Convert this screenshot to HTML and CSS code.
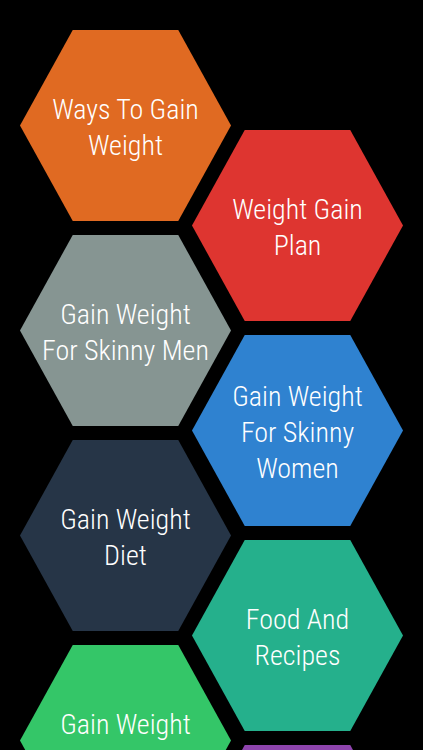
FILE: index.html
```html
<!DOCTYPE html>
<html lang="en">
<head>
<meta charset="utf-8">
<title>Gain Weight</title>
<link rel="stylesheet" href="styles.css">
</head>
<body>
<main class="comb">
  <div class="col col-left">
    <div class="hex orange"><span>Ways To Gain<br>Weight</span></div>
    <div class="hex gray"><span>Gain Weight<br>For Skinny Men</span></div>
    <div class="hex dark"><span>Gain Weight<br>Diet</span></div>
    <div class="hex green"><span>Gain Weight<br>Exercises</span></div>
  </div>
  <div class="col col-right">
    <div class="hex red"><span>Weight Gain<br>Plan</span></div>
    <div class="hex blue"><span>Gain Weight<br>For Skinny<br>Women</span></div>
    <div class="hex teal"><span>Food And<br>Recipes</span></div>
    <div class="hex purple"><span>Tips</span></div>
  </div>
</main>
</body>
</html>
```
FILE: styles.css
```css
html, body {
  margin: 0;
  padding: 0;
  background: #000;
}
body {
  width: 423px;
  height: 750px;
  overflow: hidden;
}
.comb {
  display: flex;
  align-items: flex-start;
  padding-left: 20px;
}
.col {
  display: flex;
  flex-direction: column;
  gap: 14px;
  flex: none;
}
.col-left {
  padding-top: 30px;
}
.col-right {
  padding-top: 130px;
  margin-left: -39px;
}
.hex {
  width: 211px;
  height: 191px;
  box-sizing: border-box;
  padding-top: 4px;
  clip-path: polygon(25% 0, 75% 0, 100% 50%, 75% 100%, 25% 100%, 0 50%);
  display: flex;
  align-items: center;
  justify-content: center;
  text-align: center;
  color: #fff;
  font-family: "Roboto Condensed", "Liberation Sans Narrow", "Open Sans", sans-serif;
  font-weight: 300;
  font-size: 28px;
  line-height: 36px;
}
.orange { background: #e06a22; }
.red { background: #de3530; }
.gray { background: #869592; }
.blue { background: #2f82d0; }
.dark { background: #263547; }
.teal { background: #25b08c; }
.green { background: #34c668; }
.purple { background: #8e44ad; }
```
